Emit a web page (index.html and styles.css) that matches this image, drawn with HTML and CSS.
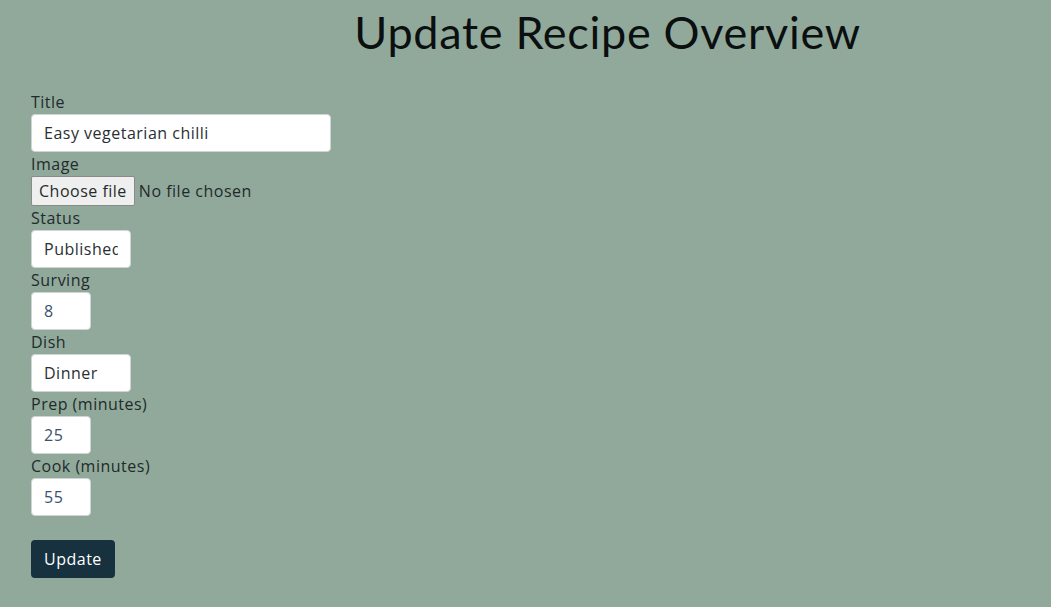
FILE: index.html
```html
<!DOCTYPE html>
<html lang="en">
<head>
<meta charset="utf-8">
<title>Update Recipe Overview</title>
<link rel="stylesheet" href="styles.css">
</head>
<body>
<header class="page-header">
  <h1 class="page-title">Update Recipe Overview</h1>
</header>
<main class="content">
  <form class="recipe-form">
    <label class="field-label" for="title">Title</label>
    <input class="field field-title" id="title" type="text" value="Easy vegetarian chilli">
    <span class="field-label">Image</span>
    <label class="file-picker" for="image">
      <span class="file-btn">Choose file</span>
      <span class="file-name">No file chosen</span>
      <input class="file-input" id="image" type="file">
    </label>
    <label class="field-label" for="status">Status</label>
    <input class="field field-mid" id="status" type="text" value="Published">
    <label class="field-label" for="serving">Surving</label>
    <input class="field field-small field-num" id="serving" type="number" value="8">
    <label class="field-label" for="dish">Dish</label>
    <input class="field field-mid" id="dish" type="text" value="Dinner">
    <label class="field-label" for="prep">Prep (minutes)</label>
    <input class="field field-small field-num" id="prep" type="number" value="25">
    <label class="field-label" for="cook">Cook (minutes)</label>
    <input class="field field-small field-num" id="cook" type="number" value="55">
    <button class="submit-btn" type="button">Update</button>
  </form>
</main>
</body>
</html>
```
FILE: styles.css
```css
* { box-sizing: border-box; }
html, body {
  margin: 0;
  padding: 0;
  background: #91a99b;
}
body {
  font-family: "Open Sans", "Noto Sans", sans-serif;
  color: #1d2a2a;
  min-height: 607px;
  letter-spacing: 0.5px;
}
.page-header {
  padding: 5px 0 0 164px;
  text-align: center;
}
.page-title {
  margin: 0;
  font-family: "Lato", "Noto Sans", sans-serif;
  font-weight: 400;
  font-size: 45px;
  line-height: 54px;
  color: #0b0f0f;
  letter-spacing: 0.7px;
}
.content {
  padding: 31px 31px 0;
}
.recipe-form {
  display: flex;
  flex-direction: column;
  align-items: flex-start;
}
.field-label {
  display: block;
  font-size: 16px;
  line-height: 24px;
  height: 24px;
  color: #1f2b2b;
}
.field {
  height: 38px;
  padding: 0 12px;
  border: 1px solid #d0d4d6;
  border-radius: 4px;
  background: #fff;
  font-family: "Open Sans", "Noto Sans", sans-serif;
  font-size: 16px;
  letter-spacing: 0.5px;
  color: #2a2f33;
  outline: none;
}
.field-title { width: 300px; }
.field-mid { width: 100px; }
.field-small { width: 60px; }
.field-num {
  color: #3b5170;
  -moz-appearance: textfield;
}
.field-num::-webkit-outer-spin-button,
.field-num::-webkit-inner-spin-button {
  -webkit-appearance: none;
  margin: 0;
}
.file-picker {
  display: flex;
  align-items: center;
  gap: 4px;
  height: 30px;
  font-size: 16px;
  color: #1f2b2b;
  cursor: pointer;
}
.file-btn {
  display: flex;
  align-items: center;
  height: 30px;
  padding: 0 7px;
  background: #efefef;
  border: 1px solid #8a8a8a;
  border-radius: 2px;
  color: #1f2b2b;
}
.file-input {
  display: none;
}
.submit-btn {
  margin-top: 24px;
  height: 38px;
  padding: 0 13px;
  background: #17313f;
  color: #fff;
  border: none;
  border-radius: 4px;
  font-family: "Open Sans", "Noto Sans", sans-serif;
  font-size: 16px;
  letter-spacing: 0.5px;
}
```
